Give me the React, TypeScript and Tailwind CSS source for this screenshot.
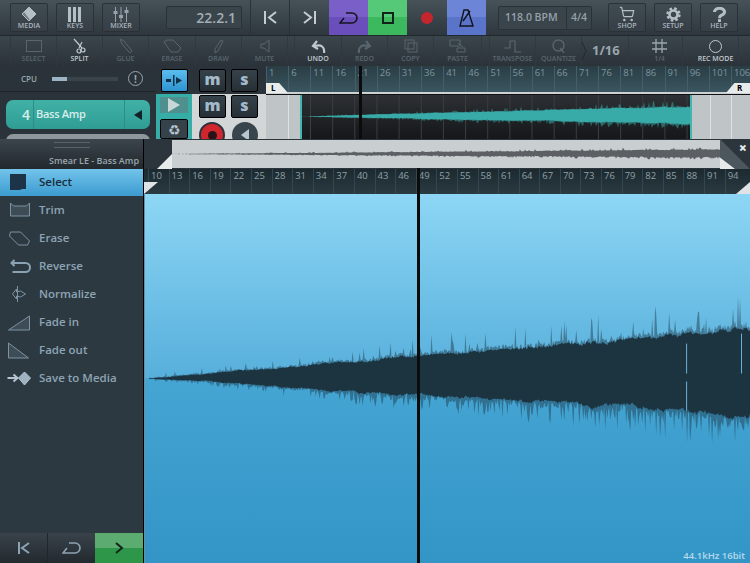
import type { ReactNode } from "react";
import { ShoppingCart } from "lucide-react";

// small seeded generator so the wave is the same on every load
const makeRandom = (seed: number) => () => {
  seed = (seed * 16807) % 2147483647;
  return seed / 2147483647;
};

const buildWave = (width: number, mid: number, scale: number, seed: number, step = 1) => {
  const rnd = makeRandom(seed);
  const coreTop: string[] = [];
  const coreBottom: string[] = [];
  const spikeTop: string[] = [];
  const spikeBottom: string[] = [];
  let wobbleUp = 0;
  let wobbleDown = 0;
  for (let x = 0; x <= width; x += step) {
    const t = x / width;
    const env = t < 0.45 ? 50 * t : 22.5 + (t - 0.45) * 50;
    wobbleUp = wobbleUp * 0.93 + (rnd() - 0.5) * 1.9;
    wobbleDown = wobbleDown * 0.93 + (rnd() - 0.5) * 2.1;
    const up = Math.max(0.2, env + (wobbleUp + (rnd() - 0.5) * 2.6) * (0.15 + t * 1.1)) * scale;
    const down = Math.max(0.2, env * 0.72 + (wobbleDown + (rnd() - 0.5) * 2.6) * (0.15 + t * 1.1)) * scale;
    const upSpike = up + (rnd() < 0.16 ? rnd() * (4 + t * 34) : rnd() * (1 + t * 6)) * scale;
    const downSpike = down + (rnd() < 0.4 ? rnd() * (2 + t * 32) : rnd() * (1 + t * 10)) * scale;
    coreTop.push(`${x} ${(mid - up).toFixed(1)}`);
    coreBottom.unshift(`${x} ${(mid + down).toFixed(1)}`);
    spikeTop.push(`${x} ${(mid - upSpike).toFixed(1)}`);
    spikeBottom.unshift(`${x} ${(mid + downSpike).toFixed(1)}`);
  }
  return {
    core: `M${coreTop.join("L")}L${coreBottom.join("L")}Z`,
    spikes: `M${spikeTop.join("L")}L${spikeBottom.join("L")}Z`,
  };
};

const mainWave = buildWave(602, 185, 1, 4711);
const trackWave = buildWave(388, 22, 0.2, 991, 1);
const overviewWave = buildWave(548, 14, 0.085, 313, 1);

const TopButton = ({ label, children, className = "" }: { label: string; children: ReactNode; className?: string }) => (
  <div
    className={`flex h-[29px] w-[38px] shrink-0 flex-col items-center justify-between rounded-[2px] border border-[#2a3238] bg-[linear-gradient(to_bottom,#414b53,#363f46)] pt-[2px] pb-[1px] ${className}`}
  >
    <div className="flex h-[17px] items-center text-[#b4bec5]">{children}</div>
    <span className="text-[7px] leading-[8px] font-semibold text-[#aab4bb]">{label}</span>
  </div>
);

const ToolCell = ({ label, width, on, children, noBorder }: { label: string; width: string; on?: boolean; children: ReactNode; noBorder?: boolean }) => (
  <div
    className={`flex h-full shrink-0 flex-col items-center justify-end pb-[3px] ${width} ${noBorder ? "" : "border-r border-[#30393f]"} ${on ? "text-[#c0c9cf]" : "text-[#58656e]"}`}
  >
    <div className="flex h-[18px] items-center">{children}</div>
    <span className="text-[7px] leading-[8px] font-semibold whitespace-nowrap">{label}</span>
  </div>
);

const MuteSolo = ({ letter, className = "" }: { letter: string; className?: string }) => (
  <div
    className={`flex h-[23px] w-[27px] items-center justify-center rounded-[2px] border border-black bg-[linear-gradient(to_bottom,#36424a,#262f35)] pb-[3px] text-[16px] leading-none font-black text-[#a3bacb] ${className}`}
  >
    {letter}
  </div>
);

const menuItems: { label: string; icon: ReactNode }[] = [
  {
    label: "Trim",
    icon: <path d="M10 7l3 3h13l3-3v13H10z M10 7v13 M29 7v13" fill="#3e4c56" stroke="#7d93a3" strokeWidth="1" />,
  },
  {
    label: "Erase",
    icon: <path d="M10 8h10l9 9-2 4H18l-9-9z" fill="none" stroke="#7d93a3" strokeWidth="1" />,
  },
  {
    label: "Reverse",
    icon: <path d="M14 8l-3 3 3 3M11 11h14a4 4 0 0 1 0 9H12" fill="none" stroke="#8ba2b2" strokeWidth="2" />,
  },
  {
    label: "Normalize",
    icon: <path d="M12 14l4-5v3l4-1 5 3-5 3-4-1v3zM17 6v16" fill="none" stroke="#7d93a3" strokeWidth="1" />,
  },
  { label: "Fade in", icon: <path d="M8 22L29 8v14z" fill="#3e4c56" stroke="#7d93a3" strokeWidth="1" /> },
  { label: "Fade out", icon: <path d="M8 7l20 15H8z" fill="#3e4c56" stroke="#7d93a3" strokeWidth="1" /> },
  {
    label: "Save to Media",
    icon: (
      <>
        <path d="M7 14h9M13 10.5l4 3.5-4 3.5" fill="none" stroke="#b5c4cf" strokeWidth="2" />
        <path d="M24 8l6 6-6 7-6-7z" fill="#9fb2bf" stroke="#b5c4cf" strokeWidth="1" />
      </>
    ),
  },
];

const topRuler = Array.from({ length: 22 }, (_, i) => 1 + i * 5);
const waveRuler = Array.from({ length: 29 }, (_, i) => 10 + i * 3);

export default function App() {
  return (
    <div className="flex h-[563px] w-[750px] flex-col overflow-hidden bg-black font-['Open_Sans',sans-serif]">
      {/* transport bar */}
      <div className="flex h-[36px] shrink-0 items-center border-b border-[#22292e] bg-[linear-gradient(to_bottom,#465158,#2e373e)]">
        <div className="flex gap-[8px] pl-[10px]">
          <TopButton label="MEDIA">
            <svg width="16" height="16" viewBox="0 0 16 16">
              <path d="M8 1l7 7-7 7-7-7z" fill="#6f7b83" stroke="#b4bec5" />
              <path d="M8 1L3 6l6 8 6-6z" fill="#b4bec5" />
            </svg>
          </TopButton>
          <TopButton label="KEYS">
            <svg width="14" height="15" viewBox="0 0 14 15" fill="#b4bec5">
              <rect x="0" y="0" width="3" height="15" />
              <rect x="5" y="0" width="3" height="15" />
              <rect x="10" y="0" width="3" height="15" />
            </svg>
          </TopButton>
          <TopButton label="MIXER">
            <svg width="16" height="15" viewBox="0 0 16 15" fill="#96a1a9">
              <rect x="2" y="0" width="1" height="15" />
              <rect x="7.5" y="0" width="1" height="15" />
              <rect x="13" y="0" width="1" height="15" />
              <rect x="0.5" y="4" width="4" height="3" />
              <rect x="6" y="8" width="4" height="3" />
              <rect x="11.5" y="3" width="4" height="3" />
            </svg>
          </TopButton>
        </div>
        <div className="ml-[26px] flex h-[23px] w-[76px] shrink-0 items-center justify-end rounded-[2px] border border-[#2a3238] bg-[#3a444b] pr-[5px] text-[14px] font-semibold text-[#a3aeb5]">
          22.2.1
        </div>
        <div className="ml-[8px] flex h-full w-[39px] items-center justify-center border-l border-[#2a3238]">
          <svg width="14" height="13" viewBox="0 0 14 13" fill="none" stroke="#c3ccd2" strokeWidth="2">
            <path d="M2 0v13M13 1L6 6.5l7 5.5" />
          </svg>
        </div>
        <div className="flex h-full w-[40px] items-center justify-center border-l border-[#2a3238]">
          <svg width="14" height="13" viewBox="0 0 14 13" fill="none" stroke="#c3ccd2" strokeWidth="2">
            <path d="M12 0v13M1 1l7 5.5L1 12" />
          </svg>
        </div>
        <div className="flex h-full w-[39px] items-center justify-center bg-[linear-gradient(to_bottom,#7a5fc8_50%,#6a4fbc_50%)]">
          <svg width="19" height="12" viewBox="0 0 19 12" fill="none" stroke="#14161c" strokeWidth="1.6">
            <path d="M7 1h6a5 5 0 0 1 0 10H1l4-5" />
          </svg>
        </div>
        <div className="flex h-full w-[39px] items-center justify-center bg-[linear-gradient(to_bottom,#55c977_50%,#3cb85f_50%)]">
          <div className="h-[12px] w-[12px] border-2 border-[#10241a] bg-transparent" />
        </div>
        <div className="flex h-full w-[40px] items-center justify-center">
          <div className="h-[12px] w-[12px] rounded-full bg-[#c4262e]" />
        </div>
        <div className="flex h-full w-[39px] items-center justify-center bg-[linear-gradient(to_bottom,#6c85d6_50%,#5a74c9_50%)]">
          <svg width="15" height="18" viewBox="0 0 15 18" fill="none" stroke="#10131d" strokeWidth="1.4">
            <path d="M5 1h4l5 16H1zM4 12L11 2M3 17h9" />
          </svg>
        </div>
        <div className="ml-[12px] flex h-[24px] w-[94px] shrink-0 items-center rounded-[2px] border border-[#2a3238] bg-[#3a444b] text-[10.5px] font-semibold text-[#95a1a9]">
          <span className="w-[67px] pl-[6px] whitespace-nowrap">118.0 BPM</span>
          <span className="flex h-full flex-1 items-center justify-center border-l border-[#2a3238]">4/4</span>
        </div>
        <div className="ml-[16px] flex gap-[8px]">
          <TopButton label="SHOP">
            <ShoppingCart size={16} strokeWidth={1.8} />
          </TopButton>
          <TopButton label="SETUP">
            <svg width="15" height="15" viewBox="0 0 15 15" fill="none" stroke="currentColor">
              <circle cx="7.5" cy="7.5" r="4" strokeWidth="2.6" />
              <circle cx="7.5" cy="7.5" r="6" strokeWidth="2.4" strokeDasharray="2.6 2.1" />
            </svg>
          </TopButton>
          <TopButton label="HELP">
            <svg width="13" height="15" viewBox="0 0 13 15" fill="none" stroke="currentColor" strokeWidth="3">
              <path d="M1.5 5a5 3.6 0 1 1 7 3.2c-1.6.8-2 1.4-2 3" />
              <path d="M6.5 12.2V15" />
            </svg>
          </TopButton>
        </div>
      </div>

      {/* edit tools */}
      <div className="flex h-[30px] shrink-0 items-stretch bg-[linear-gradient(to_bottom,#3b454c,#2b3339)] pl-[10px]">
        <div className="flex h-full border-l border-[#30393f]">
          <ToolCell label="SELECT" width="w-[46px]">
            <div className="h-[12px] w-[16px] border border-[#58656e]" />
          </ToolCell>
          <ToolCell label="SPLIT" width="w-[46px]" on>
            <svg width="14" height="16" viewBox="0 0 14 16" fill="none" stroke="currentColor" strokeWidth="1.2">
              <path d="M1 1l8 9M9 4l-3 6" />
              <circle cx="10" cy="12" r="2" />
              <circle cx="6" cy="13" r="2" />
            </svg>
          </ToolCell>
          <ToolCell label="GLUE" width="w-[46px]">
            <svg width="14" height="16" viewBox="0 0 14 16" fill="none" stroke="currentColor">
              <path d="M1 1l4 2 8 10-2 2-8-9z" />
            </svg>
          </ToolCell>
          <ToolCell label="ERASE" width="w-[47px]">
            <svg width="19" height="14" viewBox="0 0 19 14" fill="none" stroke="currentColor">
              <path d="M1 3l3-2h6l8 8-3 4H8z" />
            </svg>
          </ToolCell>
          <ToolCell label="DRAW" width="w-[46px]">
            <svg width="10" height="15" viewBox="0 0 10 15" fill="none" stroke="currentColor">
              <path d="M7 1l2 1-5 10-3 2v-4z" />
            </svg>
          </ToolCell>
          <ToolCell label="MUTE" width="w-[46px]">
            <svg width="10" height="14" viewBox="0 0 10 14" fill="none" stroke="currentColor">
              <path d="M9 1v12L4 9H1V5h3z" />
            </svg>
          </ToolCell>
        </div>
        <div className="ml-[6px] flex h-full border-l border-[#30393f]">
          <ToolCell label="UNDO" width="w-[47px]" on>
            <svg width="15" height="13" viewBox="0 0 15 13" fill="none" stroke="currentColor" strokeWidth="2.2">
              <path d="M13 13c1-6-3-9-9-7M6 1L2 6l5 3" />
            </svg>
          </ToolCell>
          <ToolCell label="REDO" width="w-[46px]">
            <svg width="15" height="13" viewBox="0 0 15 13" fill="none" stroke="currentColor" strokeWidth="2.2">
              <path d="M2 13C1 7 5 4 11 6M9 1l4 5-5 3" />
            </svg>
          </ToolCell>
          <ToolCell label="COPY" width="w-[46px]">
            <svg width="14" height="14" viewBox="0 0 14 14" fill="none" stroke="currentColor">
              <rect x="1" y="1" width="9" height="9" />
              <rect x="4" y="4" width="9" height="9" />
            </svg>
          </ToolCell>
          <ToolCell label="PASTE" width="w-[48px]">
            <svg width="17" height="14" viewBox="0 0 17 14" fill="none" stroke="currentColor">
              <path d="M1 1h10v6H1zM8 9h8v4H8zM9 4l5 4" />
            </svg>
          </ToolCell>
        </div>
        <div className="ml-[7px] flex h-full border-l border-[#30393f]">
          <ToolCell label="TRANSPOSE" width="w-[46px]">
            <svg width="17" height="13" viewBox="0 0 17 13" fill="none" stroke="currentColor" strokeWidth="1.2">
              <path d="M0 8h6V1h5v11h6" />
            </svg>
          </ToolCell>
          <ToolCell label="QUANTIZE" width="w-[46px]">
            <svg width="13" height="14" viewBox="0 0 13 14" fill="none" stroke="currentColor" strokeWidth="1.4">
              <circle cx="6.5" cy="6.5" r="5.5" />
              <path d="M8 9l4 5" />
            </svg>
          </ToolCell>
          <div className="flex h-full w-[47px] items-center border-r border-[#30393f] text-[13px] font-bold text-[#9aa6ae]">
            <svg width="5" height="30" viewBox="0 0 5 30" fill="none" stroke="#22292e" className="shrink-0">
              <path d="M0 6l4 9-4 9" />
            </svg>
            <span className="ml-[5px] whitespace-nowrap">1/16</span>
          </div>
        </div>
        <div className="ml-[8px] flex h-full">
          <ToolCell label="1/4" width="w-[46px]">
            <svg width="15" height="14" viewBox="0 0 15 14" fill="none" stroke="#9aa6ae" strokeWidth="1.3">
              <path d="M4 0v14M10 0v14M0 4h15M0 10h15" />
            </svg>
          </ToolCell>
        </div>
        <div className="ml-[10px] flex h-full">
          <ToolCell label="REC MODE" width="w-[46px]" on>
            <div className="h-[13px] w-[13px] rounded-full border border-[#c0c9cf]" />
          </ToolCell>
        </div>
      </div>

      {/* tracks strip */}
      <div className="relative flex h-[73px] shrink-0 bg-[#1b2125]">
        <div className="w-[156px] shrink-0 overflow-hidden bg-[#2a3339]">
          <div className="flex h-[26px] items-center border-b border-[#1e2428] pl-[21px] text-[8px] text-[#98a5ae]">
            <span className="w-[31px] font-semibold">CPU</span>
            <div className="h-[4px] w-[66px] bg-[#3a444b]">
              <div className="h-full w-[15px] bg-[#9db4c4]" />
            </div>
            <div className="ml-[10px] flex h-[15px] w-[15px] items-center justify-center rounded-full border border-[#98a5ae] text-[10px] leading-none font-bold">
              !
            </div>
          </div>
          <div className="mx-[6px] mt-[8px] flex h-[29px] items-center rounded-[7px] bg-[linear-gradient(to_bottom,#41b1a6,#2f9d94)] text-[#d8eeec]">
            <span className="w-[27px] pr-[3px] text-right text-[14px] font-semibold">4</span>
            <span className="flex h-full flex-1 items-center border-l border-[#2d8c85] pl-[2px] text-[11px] font-semibold tracking-tight whitespace-nowrap">Bass Amp</span>
            <span className="flex h-full w-[26px] items-center justify-center border-l border-[#2d8c85]">
              <span className="h-0 w-0 border-y-[5px] border-r-[8px] border-y-transparent border-r-[#12202a]" />
            </span>
          </div>
          <div className="mx-[6px] mt-[5px] h-[8px] rounded-t-[7px] bg-[#8e979c]" />
        </div>

        <div className="flex w-[110px] shrink-0 flex-col">
          <div className="flex h-[28px] shrink-0 items-center gap-[5px] bg-[#2a3339] pl-[5px]">
            <div className="flex h-[23px] w-[27px] items-center justify-center rounded-[2px] border border-black bg-[linear-gradient(to_bottom,#5bbdee,#2e94d0)]">
              <svg width="18" height="11" viewBox="0 0 18 11" fill="#123047">
                <rect x="0" y="4" width="5" height="3" />
                <rect x="7" y="0" width="1.5" height="11" />
                <path d="M10 2l6 3.5L10 9z" />
              </svg>
            </div>
            <MuteSolo letter="m" className="ml-[6px]" />
            <MuteSolo letter="s" />
          </div>
          <div className="flex flex-1 overflow-hidden">
            <div className="flex w-[36px] shrink-0 flex-col items-center gap-[6px] bg-[#36ada6] pt-[3px]">
              <div className="flex h-[22px] w-[28px] items-center justify-center bg-[#4f8f8d]">
                <span className="h-0 w-0 border-y-[7px] border-l-[12px] border-y-transparent border-l-[#c8d6d6]" />
              </div>
              <div className="h-[26px] w-[28px] rounded-[2px] border border-black bg-[#36424a] pt-[2px] text-center text-[14px] leading-[16px] text-[#b8c6d0]">
                ♻
              </div>
            </div>
            <div className="flex flex-1 flex-col gap-[4px] bg-[#d3d6d7] pl-[7px]">
              <div className="flex gap-[5px] pt-[1px]">
                <MuteSolo letter="m" />
                <MuteSolo letter="s" />
              </div>
              <div className="flex gap-[5px]">
                <div className="flex h-[26px] w-[26px] items-center justify-center rounded-full border-2 border-[#2a3339] bg-[#d0262e]">
                  <div className="h-[9px] w-[9px] rounded-full bg-[#2a1216]" />
                </div>
                <div className="ml-[2px] flex h-[26px] w-[26px] items-center justify-center rounded-full bg-[#39454d]">
                  <span className="h-0 w-0 border-y-[6px] border-r-[8px] border-y-transparent border-r-[#b8c6d0]" />
                </div>
              </div>
            </div>
          </div>
        </div>

        <div className="relative flex min-w-0 flex-1 flex-col">
          <div className="flex h-[26px] shrink-0 overflow-hidden bg-[linear-gradient(to_bottom,#2a3d45,#3a5660)]">
            {topRuler.map((n) => (
              <span key={n} className="h-full w-[22.15px] shrink-0 border-l border-[#455e68] pl-[2px] text-[9.5px] leading-[13px] text-[#7d959f]">
                {n}
              </span>
            ))}
          </div>
          <div className="h-[2px] shrink-0 bg-[#cdd1d3]" />
          <div className="flex flex-1 overflow-hidden border-t border-[#111]">
            <div className="flex w-[36px] shrink-0 bg-[#bfc4c6]">
              <div className="ml-[22px] h-full w-[1px] bg-[#dfe2e3]" />
              <div className="ml-auto h-full w-[2px] bg-[#41b5b0]" />
            </div>
            <div className="relative flex-1 bg-[linear-gradient(to_bottom,#2d3034,#151719)]">
              <svg className="block h-full w-full" viewBox="0 0 388 45" preserveAspectRatio="none">
                {Array.from({ length: 18 }, (_, i) => (
                  <rect key={i} x={8 + i * 22.15} y="0" width="1" height="45" fill="#3a3e42" />
                ))}
                <path d={trackWave.spikes} fill="#38aaa8" opacity="0.55" />
                <path d={trackWave.core} fill="#38aaa8" />
              </svg>
            </div>
            <div className="flex w-[60px] shrink-0 bg-[#bfc4c6]">
              <div className="h-full w-[2px] bg-[#41b5b0]" />
              <div className="ml-[18px] h-full w-[1px] bg-[#dfe2e3]" />
              <div className="ml-[20px] h-full w-[1px] bg-[#dfe2e3]" />
            </div>
          </div>
          <div className="absolute top-[17px] left-0 h-[10px] w-[22px] bg-[#e8ebec] pl-[5px] text-[8px] leading-[10px] font-bold text-black [clip-path:polygon(0_0,60%_0,100%_100%,0_100%)]">
            L
          </div>
          <div className="absolute top-[17px] right-0 h-[10px] w-[24px] bg-[#e8ebec] pl-[11px] text-[8px] leading-[10px] font-bold text-black [clip-path:polygon(35%_0,100%_0,100%_100%,0_100%)]">
            R
          </div>
          <div className="absolute top-0 bottom-0 left-[93px] w-[3px] bg-[#0b0b0b]" />
        </div>
      </div>

      {/* sample editor */}
      <div className="flex min-h-0 flex-1">
        <div className="flex w-[144px] shrink-0 flex-col border-r border-black bg-[#2c3941]">
          <div className="relative flex h-[30px] shrink-0 items-end justify-end bg-[linear-gradient(to_bottom,#3b454c,#22292e)] pr-[4px] pb-[3px] text-[9px] leading-[10px] font-semibold whitespace-nowrap text-[#9aa6ae]">
            <div className="absolute top-[3px] left-[54px] h-[6px] w-[36px] border-y border-[#586268]" />
            Smear LE - Bass Amp
          </div>
          <div className="flex h-[27px] shrink-0 items-center bg-[linear-gradient(to_bottom,#72c4ea,#3c9bd0)] pb-[1px] text-[11.5px] font-semibold text-[#1b2c3a]">
            <svg width="39" height="26" viewBox="0 0 39 26">
              <path d="M10 5h16v15h-4l-2 1H10z" fill="#1d3348" />
            </svg>
            <span>Select</span>
          </div>
          <div className="flex flex-col">
            {menuItems.map((item) => (
              <div key={item.label} className="flex h-[28px] items-center text-[11.5px] font-semibold text-[#8ea4b4]">
                <svg width="39" height="28" viewBox="0 0 38 28" className="shrink-0">
                  {item.icon}
                </svg>
                <span className="whitespace-nowrap">{item.label}</span>
              </div>
            ))}
          </div>
          <div className="mt-auto flex h-[30px] bg-[linear-gradient(to_bottom,#39424a,#222a2f)]">
            <div className="flex w-[48px] items-center justify-center border-r border-[#20272b]">
              <svg width="13" height="12" viewBox="0 0 13 12" fill="none" stroke="#8ea4b4" strokeWidth="2">
                <path d="M2 0v12M12 1L5 6l7 5" />
              </svg>
            </div>
            <div className="flex w-[47px] items-center justify-center">
              <svg width="19" height="12" viewBox="0 0 19 12" fill="none" stroke="#8ea4b4" strokeWidth="1.6">
                <path d="M7 1h6a5 5 0 0 1 0 10H1l4-5" />
              </svg>
            </div>
            <div className="flex flex-1 items-center justify-center bg-[linear-gradient(to_bottom,#5cac72_50%,#2e9648_50%)]">
              <svg width="9" height="12" viewBox="0 0 9 12" fill="none" stroke="#10241a" strokeWidth="2">
                <path d="M1 1l6 5-6 5" />
              </svg>
            </div>
          </div>
        </div>

        <div className="relative flex min-w-0 flex-1 flex-col">
          <div className="flex h-[30px] shrink-0 bg-[#2c353b]">
            <div className="w-[28px] shrink-0" />
            <div className="mt-[1px] h-[28px] w-[548px] bg-[#c9ced1]">
              <svg className="block h-full w-full" viewBox="0 0 548 28" preserveAspectRatio="none">
                <path d={overviewWave.spikes} fill="#5c6064" />
              </svg>
            </div>
            <div className="relative flex flex-1 items-start justify-end pt-[2px] pr-[3px] text-[14px] leading-[14px] font-black text-[#e8ebec]">
              <div className="absolute inset-0 bg-[#4b565d] [clip-path:polygon(0_0,100%_100%,0_100%)]" />
              <div className="absolute inset-0 bg-[#e6e9ea] [clip-path:polygon(0_62%,50%_100%,0_100%)]" />
              <span className="relative">×</span>
            </div>
          </div>
          <div className="flex h-[25px] shrink-0 overflow-hidden bg-[linear-gradient(to_bottom,#1c2a30,#2a3a41)] pl-[4px]">
            {waveRuler.map((n) => (
              <span key={n} className="h-full w-[20.6px] shrink-0 border-l border-[#34464e] pl-[2px] text-[9.5px] leading-[14px] text-[#8ea0a8]">
                {n}
              </span>
            ))}
          </div>
          <div className="relative min-h-0 flex-1 border-l border-[#6a8ea3] bg-[linear-gradient(to_bottom,#8dd6f5_0%,#56afdb_50%,#45a5d3_50%,#3295c6_100%)]">
            <svg className="block h-full w-full" viewBox="0 0 606 370" preserveAspectRatio="none">
              <g transform="translate(4 0)">
                <path d={mainWave.spikes} fill="#1c3340" opacity="0.45" />
                <path d={mainWave.core} fill="#1c3340" />
              </g>
              <rect x="542" y="150" width="1" height="30" fill="#6db4d8" />
              <rect x="542" y="188" width="1" height="30" fill="#6db4d8" />
              <rect x="597" y="140" width="1" height="40" fill="#6db4d8" />
            </svg>
            <span className="absolute right-[5px] bottom-[2px] text-[9.5px] leading-[11px] font-semibold text-[#b6daec]">44.1kHz 16bit</span>
          </div>

          {/* overlays: handles and playhead */}
          <div className="absolute top-[15px] left-[13px] h-0 w-0 border-b-[15px] border-l-[15px] border-b-[#e8ebec] border-l-transparent" />
          <div className="absolute top-[43px] left-0 h-0 w-0 border-t-[12px] border-r-[14px] border-t-[#dfe3e5] border-r-transparent" />
          <div className="absolute top-[43px] right-0 h-0 w-0 border-b-[12px] border-l-[14px] border-b-[#dfe3e5] border-l-transparent" />
          <div className="absolute top-[29px] bottom-0 left-[273px] w-[3px] bg-[#0c0c0c]" />
        </div>
      </div>
    </div>
  );
}
